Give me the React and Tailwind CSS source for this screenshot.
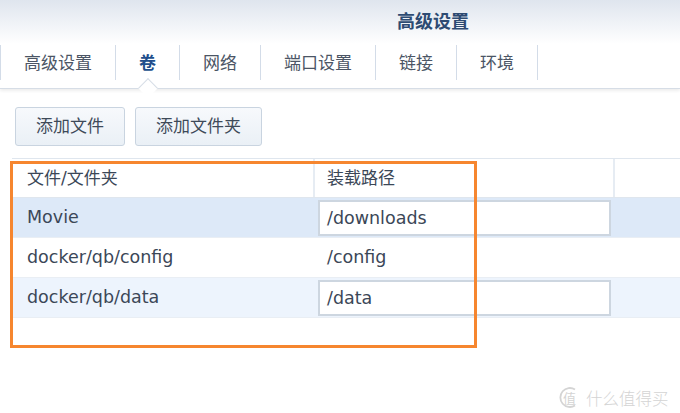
const tabs = ['高级设置', '卷', '网络', '端口设置', '链接', '环境'];

const rows = [
  { file: 'Movie', path: '/downloads', bg: 'bg-[#dde9f8]', input: true },
  { file: 'docker/qb/config', path: '/config', bg: 'bg-white', input: false },
  { file: 'docker/qb/data', path: '/data', bg: 'bg-[#edf4fd]', input: true },
];

const App = () => {
  return (
    <div
      className="relative w-[680px] h-[413px] overflow-hidden bg-white"
      style={{ fontFamily: "'DejaVu Sans', 'Noto Sans CJK SC', sans-serif" }}
    >
      {/* Window title */}
      <div className="h-[44px] bg-gradient-to-b from-[#dfe5ee] to-white pl-[397px] pt-[9px]">
        <span className="text-[18px] font-bold text-[#2d4b72] leading-[26px]">高级设置</span>
      </div>

      {/* Tabs */}
      <div className="relative h-[45px] border-b border-[#d6dde6] shadow-[0_2px_3px_rgba(0,0,0,0.07)]">
        <div className="flex items-start pt-[1px]">
          {tabs.map((t, i) => (
            <div
              key={t}
              className={`h-[35px] px-[23px] border-r border-[#d3dce8] text-[17px] leading-[36px] ${
                i === 0 ? 'border-l' : ''
              } ${i === 1 ? 'text-[#204e8c] font-bold' : 'text-[#4b5565]'}`}
            >
              {t}
            </div>
          ))}
        </div>
        {/* active notch */}
        <div className="absolute left-[141px] top-[37px] w-[14px] h-[14px] rotate-45 bg-white border-l border-t border-[#d6dde6]" />
      </div>

      {/* Buttons */}
      <div className="flex gap-[10px] pl-[15px] mt-[18px]">
        {['添加文件', '添加文件夹'].map((b) => (
          <button
            key={b}
            className="h-[39px] px-[20px] rounded-[3px] border border-[#c9d4e0] bg-gradient-to-b from-[#f7f9fc] to-[#eaf0f6] text-[17px] text-[#3e4a59]"
          >
            {b}
          </button>
        ))}
      </div>

      {/* Table */}
      <div className="ml-[12px] mt-[12px] w-[700px] text-[#3b4757]">
        <div className="flex h-[40px] border-t border-b border-[#dfe6ee] bg-white text-[17px]">
          <div className="w-[303px] pl-[15px] leading-[38px] border-r-2 border-[#e6ecf3]">文件/文件夹</div>
          <div className="w-[300px] pl-[12px] leading-[38px] border-r-2 border-[#e6ecf3]">装载路径</div>
          <div className="flex-1" />
        </div>
        {rows.map((r) => (
          <div key={r.file} className={`flex h-[40px] items-center border-b border-[#e9eef4] text-[17.5px] ${r.bg}`}>
            <div className="w-[303px] pl-[15px]">{r.file}</div>
            <div className="w-[300px] h-full flex items-center">
              {r.input ? (
                <div className="ml-[3px] w-[293px] h-[36px] bg-white border-2 border-[#cdd6e0] pl-[7px] leading-[32px]">
                  {r.path}
                </div>
              ) : (
                <div className="pl-[12px]">{r.path}</div>
              )}
            </div>
            <div className="flex-1" />
          </div>
        ))}
      </div>

      {/* Annotation frame */}
      <div className="absolute left-[10px] top-[161px] w-[467px] h-[187px] border-[3px] border-[#f6862f]" />

      {/* Watermark */}
      <div
        className="absolute left-[558px] top-[386px] flex items-center gap-[5px] text-[#d4d4d4]"
        style={{ fontFamily: "'Noto Sans CJK SC', sans-serif" }}
      >
        <svg width="23" height="23" viewBox="0 0 23 23" className="shrink-0">
          <path d="M17 3.5 A9.5 9.5 0 1 0 17 19.5" fill="none" stroke="#d4d4d4" strokeWidth="1.8" />
          <text x="11.5" y="16.5" textAnchor="middle" fontSize="13" fill="#d4d4d4">
            值
          </text>
        </svg>
        <span className="whitespace-nowrap text-[16.5px] leading-[22px] font-light">什么值得买</span>
      </div>
    </div>
  );
};

export default App;
